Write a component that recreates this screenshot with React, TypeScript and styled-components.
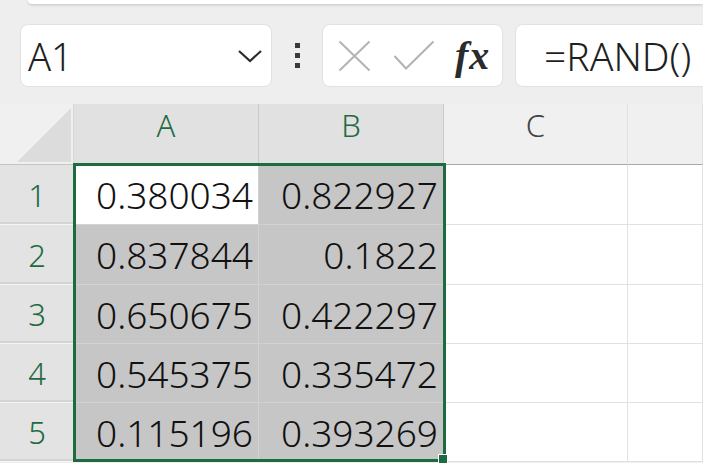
import { createGlobalStyle } from "styled-components";
import styled from "styled-components";

const GlobalStyle = createGlobalStyle`
  html, body {
    margin: 0;
    padding: 0;
    background: #eeeeee;
  }
  body {
    font-family: "Noto Sans", "Liberation Sans", sans-serif;
  }
`;

const Page = styled.div`
  width: 703px;
  height: 463px;
  overflow: hidden;
  background: #eeeeee;
`;

const TopStrip = styled.div`
  height: 4px;
  margin-left: 28px;
  background: #ffffff;
  border-bottom-left-radius: 6px;
  box-shadow: 0 1px 3px rgba(0, 0, 0, 0.18);
`;

const Toolbar = styled.div`
  display: flex;
  align-items: center;
  height: 63px;
  margin-top: 20px;
  padding-left: 20px;
`;

const Box = styled.div`
  height: 63px;
  box-sizing: border-box;
  background: #ffffff;
  border: 1px solid #e2e2e2;
  border-radius: 8px;
  display: flex;
  align-items: center;
`;

const NameBox = styled(Box)`
  width: 252px;
  padding: 0 8px 0 7px;
  justify-content: space-between;
  font-size: 38px;
  font-weight: 350;
  color: #1f1f1f;
`;

const Dots = styled.div`
  width: 50px;
  display: flex;
  flex-direction: column;
  align-items: center;
  gap: 5px;
  span {
    width: 5px;
    height: 5px;
    background: #3a3a3a;
  }
`;

const FxBox = styled(Box)`
  width: 181px;
  padding-left: 14px;
`;

const IconSlot = styled.div<{ $w: number; $ml?: number }>`
  width: ${(p) => p.$w}px;
  margin-left: ${(p) => p.$ml ?? 0}px;
  display: flex;
  align-items: center;
`;

const FxText = styled.span`
  font-family: "Liberation Serif", "DejaVu Serif", serif;
  font-style: italic;
  font-weight: bold;
  font-size: 40px;
  color: #2b2b2b;
  letter-spacing: 1px;
  line-height: 1;
`;

const FormulaBox = styled(Box)`
  flex: 1;
  margin-left: 12px;
  margin-right: -12px;
  padding-left: 28px;
  font-size: 39px;
  font-weight: 350;
  color: #1f1f1f;
  white-space: nowrap;
  overflow: hidden;
`;

const GridWrap = styled.div`
  position: relative;
  margin-top: 17px;
`;

const Grid = styled.div`
  display: grid;
  grid-template-columns: 74px 185px 185px 184px 1fr;
  grid-template-rows: 61px 60px 60px 59px 59px 59px;
`;

const Corner = styled.div`
  position: relative;
  background: #f0f0f0;
  border-right: 1px solid #d6d6d6;
  border-bottom: 1px solid #c4c4c4;
  box-sizing: border-box;
  svg {
    position: absolute;
    right: 2px;
    bottom: 2px;
  }
`;

const ColHead = styled.div<{ $sel?: boolean }>`
  box-sizing: border-box;
  display: flex;
  justify-content: center;
  align-items: flex-start;
  font-size: 31px;
  font-weight: 350;
  line-height: 42px;
  background: ${(p) => (p.$sel ? "#e1e1e1" : "#f0f0f0")};
  color: ${(p) => (p.$sel ? "#1e6b41" : "#444444")};
  border-right: 1px solid ${(p) => (p.$sel ? "#cacaca" : "#e2e2e2")};
  border-bottom: 1px solid ${(p) => (p.$sel ? "#1e6b41" : "#a9a9a9")};
`;

const RowHead = styled.div`
  box-sizing: border-box;
  display: flex;
  justify-content: center;
  align-items: center;
  font-size: 31px;
  font-weight: 350;
  background: #e3e3e3;
  color: #1e6b41;
  border-bottom: 1px solid #f5f5f5;
  box-shadow: inset 0 -2px 0 #d4d4d4;
`;

const Cell = styled.div<{ $sel?: boolean; $active?: boolean }>`
  box-sizing: border-box;
  display: flex;
  justify-content: flex-end;
  align-items: center;
  padding-right: 5px;
  font-size: 37px;
  font-weight: 350;
  color: #111111;
  background: ${(p) => (p.$active ? "#ffffff" : p.$sel ? "#c6c6c6" : "#ffffff")};
  border-right: 1px solid ${(p) => (p.$sel ? "#d2d2d2" : "#e1e1e1")};
  border-bottom: 1px solid ${(p) => (p.$sel ? "#d2d2d2" : "#e1e1e1")};
`;

const Selection = styled.div`
  position: absolute;
  left: 73px;
  top: 59px;
  width: 373px;
  height: 299px;
  box-sizing: border-box;
  border: 3px solid #1e6b41;
  pointer-events: none;
`;

const FillHandle = styled.div`
  position: absolute;
  right: -5px;
  bottom: -5px;
  width: 8px;
  height: 8px;
  background: #1e6b41;
  border: 1px solid #ffffff;
`;

const data: [string, string][] = [
  ["0.380034", "0.822927"],
  ["0.837844", "0.1822"],
  ["0.650675", "0.422297"],
  ["0.545375", "0.335472"],
  ["0.115196", "0.393269"],
];

function Chevron() {
  return (
    <svg width="26" height="16" viewBox="0 0 26 16">
      <path d="M2 3 L13 13 L24 3" fill="none" stroke="#2b2b2b" strokeWidth="2.2" />
    </svg>
  );
}

function CancelIcon() {
  return (
    <svg width="33" height="32" viewBox="0 0 33 32">
      <path d="M1.5 1.5 L31.5 30.5 M31.5 1.5 L1.5 30.5" stroke="#b3b3b3" strokeWidth="2" />
    </svg>
  );
}

function CheckIcon() {
  return (
    <svg width="42" height="32" viewBox="0 0 42 32">
      <path d="M1.5 16 L13 28.5 L40.5 1.5" fill="none" stroke="#b3b3b3" strokeWidth="2" />
    </svg>
  );
}

export default function App() {
  return (
    <Page>
      <GlobalStyle />
      <TopStrip />
      <Toolbar>
        <NameBox>
          <span>A1</span>
          <Chevron />
        </NameBox>
        <Dots>
          <span />
          <span />
          <span />
        </Dots>
        <FxBox>
          <IconSlot $w={33} $ml={1}>
            <CancelIcon />
          </IconSlot>
          <IconSlot $w={42} $ml={22}>
            <CheckIcon />
          </IconSlot>
          <IconSlot $w={40} $ml={20}>
            <FxText>fx</FxText>
          </IconSlot>
        </FxBox>
        <FormulaBox>=RAND()</FormulaBox>
      </Toolbar>
      <GridWrap>
        <Grid>
          <Corner>
            <svg width="54" height="54" viewBox="0 0 54 54">
              <path d="M54 0 L54 54 L0 54 Z" fill="#dcdcdc" />
            </svg>
          </Corner>
          <ColHead $sel>A</ColHead>
          <ColHead $sel>B</ColHead>
          <ColHead>C</ColHead>
          <ColHead />
          {data.map((row, i) => [
            <RowHead key={`h${i}`}>{i + 1}</RowHead>,
            <Cell key={`a${i}`} $sel $active={i === 0}>
              {row[0]}
            </Cell>,
            <Cell key={`b${i}`} $sel>
              {row[1]}
            </Cell>,
            <Cell key={`c${i}`} />,
            <Cell key={`d${i}`} />,
          ])}
        </Grid>
        <Selection>
          <FillHandle />
        </Selection>
      </GridWrap>
    </Page>
  );
}
